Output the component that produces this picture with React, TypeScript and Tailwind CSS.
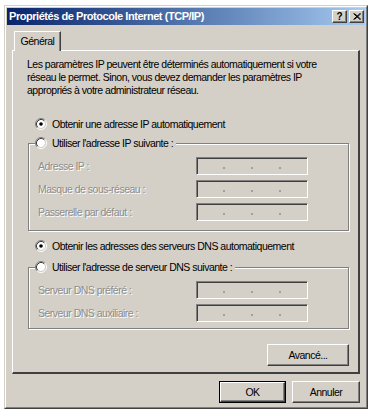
import React from 'react';

// classic 3D frames
const raised =
  'border border-t-white border-l-white border-b-[#404040] border-r-[#404040] shadow-[inset_-1px_-1px_0_#808080]';
const sunken =
  'border border-t-[#808080] border-l-[#808080] border-b-white border-r-white shadow-[inset_1px_1px_0_#404040]';
const disabledText = 'text-[#8c8c8c] [text-shadow:1px_1px_0_#ffffff]';

const Radio: React.FC<{ checked?: boolean }> = ({ checked }) => (
  <svg width="12" height="12" viewBox="0 0 12 12" className="shrink-0">
    <circle cx="6" cy="6" r="4" fill="#ffffff" />
    <path d="M2.11 9.89 A5.5 5.5 0 0 1 9.89 2.11" fill="none" stroke="#808080" />
    <path d="M9.89 2.11 A5.5 5.5 0 0 1 2.11 9.89" fill="none" stroke="#ffffff" />
    <path d="M2.82 9.18 A4.5 4.5 0 0 1 9.18 2.82" fill="none" stroke="#404040" />
    <path d="M9.18 2.82 A4.5 4.5 0 0 1 2.82 9.18" fill="none" stroke="#d4d0c8" />
    {checked && <circle cx="6" cy="6" r="1.8" fill="#000000" />}
  </svg>
);

const RadioRow: React.FC<{ label: string; checked?: boolean }> = ({ label, checked }) => (
  <div className="flex h-[14px] items-center gap-[5px]">
    <Radio checked={checked} />
    <span className="whitespace-nowrap">{label}</span>
  </div>
);

const IpBox: React.FC = () => (
  <div className={`flex h-[18px] w-[112px] items-center bg-[#d4d0c8] ${sunken}`}>
    {[0, 1, 2, 3].map((i) => (
      <React.Fragment key={i}>
        <span className="flex-1" />
        {i < 3 && <span className="mt-[3px] h-[2px] w-[2px] bg-[#a0a0a0]" />}
      </React.Fragment>
    ))}
  </div>
);

const Field: React.FC<{ label: string }> = ({ label }) => (
  <div className="flex h-[18px] items-center">
    <span className={`w-[158px] whitespace-nowrap ${disabledText}`}>{label}</span>
    <IpBox />
  </div>
);

const Group: React.FC<{ label: string; fields: string[]; pb: string; className?: string }> = ({
  label,
  fields,
  pb,
  className,
}) => (
  <div className={`flex flex-col ${className ?? ''}`}>
    <div className="relative z-10 flex h-[14px] pl-[7px]">
      <div className="flex items-center bg-[#d4d0c8] pr-[3px]">
        <RadioRow label={label} />
      </div>
    </div>
    <div
      className={`-mt-[7px] flex w-[321px] flex-col gap-[5px] border border-[#808080] pl-[9px] pt-[13px] shadow-[1px_1px_0_#fff,inset_1px_1px_0_#fff] ${pb}`}
    >
      {fields.map((f) => (
        <Field key={f} label={f} />
      ))}
    </div>
  </div>
);

export default function App() {
  return (
    <div
      className="min-h-screen bg-white text-[10.5px] leading-[13px] tracking-[-0.5px] text-black"
      style={{ fontFamily: '"Liberation Sans", Arial, sans-serif' }}
    >
      <div className="ml-[4px] pt-[5px]">
        <div className="w-[364px] border border-t-[#d4d0c8] border-l-[#d4d0c8] border-b-[#404040] border-r-[#404040] bg-[#d4d0c8]">
          <div className="flex h-[402px] flex-col border border-t-white border-l-white border-b-[#808080] border-r-[#808080] p-[1px]">
            {/* title bar */}
            <div className="flex h-[17px] items-center bg-gradient-to-r from-[#0a246a] to-[#a6caf0] pl-[2px] pr-[1px]">
              <span className="flex-1 whitespace-nowrap text-[11px] font-bold tracking-[-0.45px] text-white">
                Propriétés de Protocole Internet (TCP/IP)
              </span>
              <div className="flex gap-[2px]">
                <div className={`flex h-[13px] w-[15px] items-center justify-center bg-[#d4d0c8] ${raised}`}>
                  <span className="text-[10px] font-bold leading-none tracking-normal">?</span>
                </div>
                <div className={`flex h-[13px] w-[15px] items-center justify-center bg-[#d4d0c8] ${raised}`}>
                  <svg width="8" height="7" viewBox="0 0 8 7">
                    <path d="M0.5 0.5 L7 6.5 M1.5 0.5 L8 6.5 M7 0.5 L0.5 6.5 M8 0.5 L1.5 6.5" stroke="#000" strokeWidth="1" />
                  </svg>
                </div>
              </div>
            </div>

            {/* body */}
            <div className="flex flex-1 flex-col px-[5px] pt-[6px]">
              <div className="relative z-10 -mb-[1px] ml-[2px] flex h-[20px] w-[47px] items-center justify-center border border-b-0 border-t-white border-l-white border-r-[#404040] bg-[#d4d0c8] shadow-[inset_-1px_0_0_#808080]">
                <span className="pb-[1px]">Général</span>
              </div>
              <div className="flex h-[324px] flex-col border-t border-l border-r-2 border-b-2 border-t-white border-l-white border-r-[#404040] border-b-[#404040] pl-[14px] pt-[7px]">
                <p className="whitespace-nowrap">
                  Les paramètres IP peuvent être déterminés automatiquement si votre
                  <br />
                  réseau le permet. Sinon, vous devez demander les paramètres IP
                  <br />
                  appropriés à votre administrateur réseau.
                </p>

                <div className="ml-[8px] mt-[20px]">
                  <RadioRow label="Obtenir une adresse IP automatiquement" checked />
                </div>

                <Group
                  className="ml-[1px] mt-[5px]"
                  label="Utiliser l'adresse IP suivante :"
                  fields={['Adresse IP :', 'Masque de sous-réseau :', 'Passerelle par défaut :']}
                  pb="pb-[9px]"
                />

                <div className="ml-[8px] mt-[8px]">
                  <RadioRow label="Obtenir les adresses des serveurs DNS automatiquement" checked />
                </div>

                <Group
                  className="ml-[1px] mt-[7px]"
                  label="Utiliser l'adresse de serveur DNS suivante :"
                  fields={['Serveur DNS préféré :', 'Serveur DNS auxiliaire :']}
                  pb="pb-[6px]"
                />

                <div className="mt-[15px] flex w-[322px] justify-end">
                  <button className={`h-[22px] w-[82px] bg-[#d4d0c8] ${raised}`}>Avancé...</button>
                </div>
              </div>

              <div className="mt-[7px] flex justify-end gap-[6px]">
                <div className="border border-black">
                  <button className={`block h-[20px] w-[65px] bg-[#d4d0c8] ${raised}`}>OK</button>
                </div>
                <button className={`h-[22px] w-[68px] bg-[#d4d0c8] ${raised}`}>Annuler</button>
              </div>
            </div>
          </div>
        </div>
      </div>
    </div>
  );
}
